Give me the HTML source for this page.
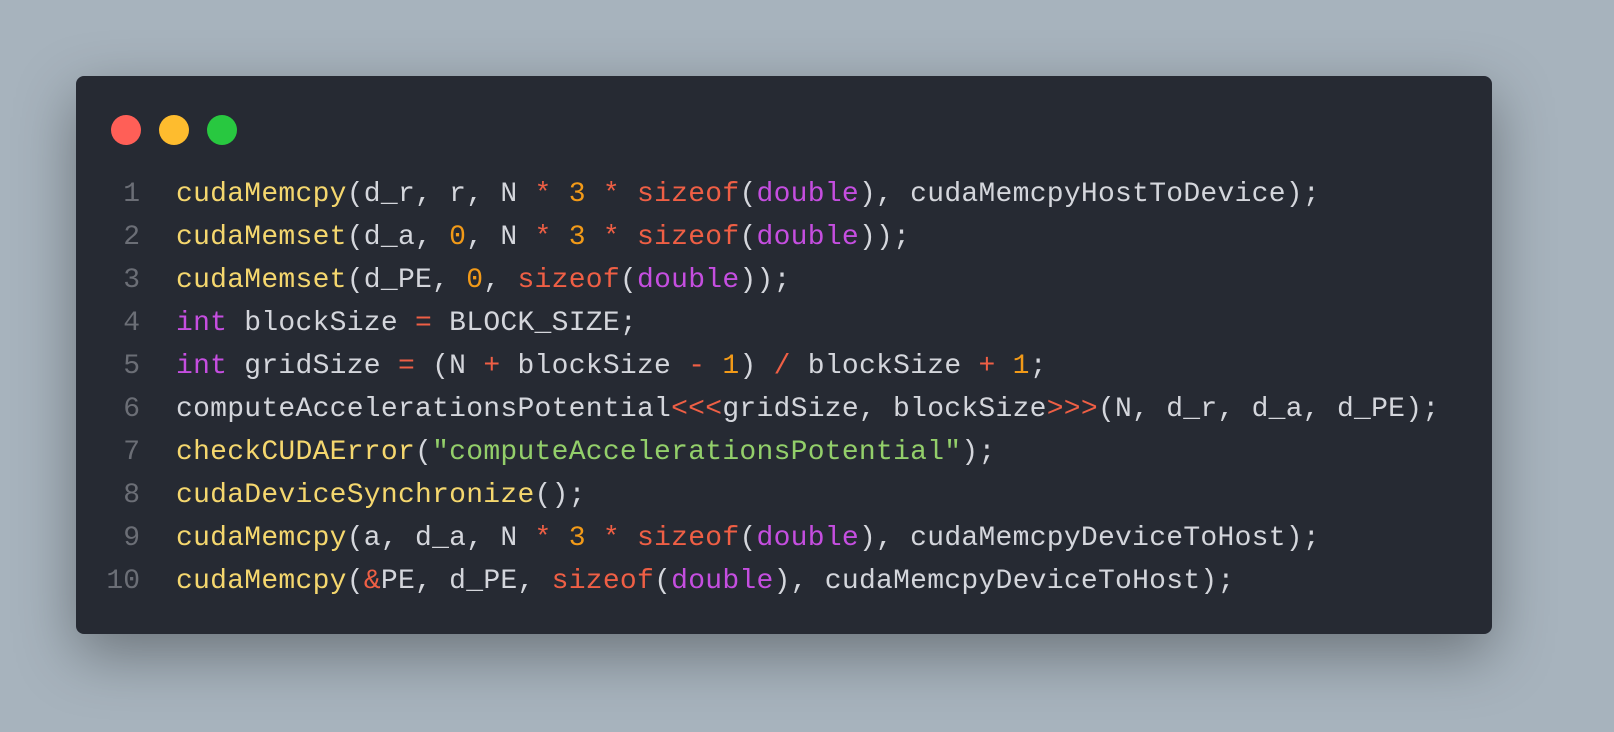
<!DOCTYPE html>
<html><head><style>
html,body{margin:0;padding:0}
body{width:1614px;height:732px;background:#a7b3bd;position:relative;overflow:hidden;font-family:"Liberation Mono","DejaVu Sans Mono",monospace}
.win{position:absolute;left:76px;top:76px;width:1416px;height:558px;background:#262a33;border-radius:8px;box-shadow:0 20px 60px rgba(0,0,0,0.35)}
.dot{position:absolute;top:115px;width:30px;height:30px;border-radius:50%}
.code{position:absolute;left:0;top:173px;font-size:28px;line-height:43px;letter-spacing:0.27px;color:#d4d6dc;white-space:pre}
.ln{display:inline-block;width:140px;text-align:right;color:#6b6e76;margin-right:36px;letter-spacing:0}
.f{color:#f5d76e}.k{color:#c54ee0}.o{color:#ef5f45}.n{color:#f29a18}.s{color:#93cf6a}
</style></head><body>
<div class="win"></div>
<div class="dot" style="left:111px;background:#ff5f57"></div>
<div class="dot" style="left:159px;background:#febc2e"></div>
<div class="dot" style="left:207px;background:#28c840"></div>
<div class="code"><span class="ln">1</span><span class="f">cudaMemcpy</span>(d_r, r, N <span class="o">*</span> <span class="n">3</span> <span class="o">*</span> <span class="o">sizeof</span>(<span class="k">double</span>), cudaMemcpyHostToDevice);
<span class="ln">2</span><span class="f">cudaMemset</span>(d_a, <span class="n">0</span>, N <span class="o">*</span> <span class="n">3</span> <span class="o">*</span> <span class="o">sizeof</span>(<span class="k">double</span>));
<span class="ln">3</span><span class="f">cudaMemset</span>(d_PE, <span class="n">0</span>, <span class="o">sizeof</span>(<span class="k">double</span>));
<span class="ln">4</span><span class="k">int</span> blockSize <span class="o">=</span> BLOCK_SIZE;
<span class="ln">5</span><span class="k">int</span> gridSize <span class="o">=</span> (N <span class="o">+</span> blockSize <span class="o">-</span> <span class="n">1</span>) <span class="o">/</span> blockSize <span class="o">+</span> <span class="n">1</span>;
<span class="ln">6</span>computeAccelerationsPotential<span class="o">&lt;&lt;&lt;</span>gridSize, blockSize<span class="o">&gt;&gt;&gt;</span>(N, d_r, d_a, d_PE);
<span class="ln">7</span><span class="f">checkCUDAError</span>(<span class="s">"computeAccelerationsPotential"</span>);
<span class="ln">8</span><span class="f">cudaDeviceSynchronize</span>();
<span class="ln">9</span><span class="f">cudaMemcpy</span>(a, d_a, N <span class="o">*</span> <span class="n">3</span> <span class="o">*</span> <span class="o">sizeof</span>(<span class="k">double</span>), cudaMemcpyDeviceToHost);
<span class="ln">10</span><span class="f">cudaMemcpy</span>(<span class="o">&amp;</span>PE, d_PE, <span class="o">sizeof</span>(<span class="k">double</span>), cudaMemcpyDeviceToHost);</div>
</body></html>
